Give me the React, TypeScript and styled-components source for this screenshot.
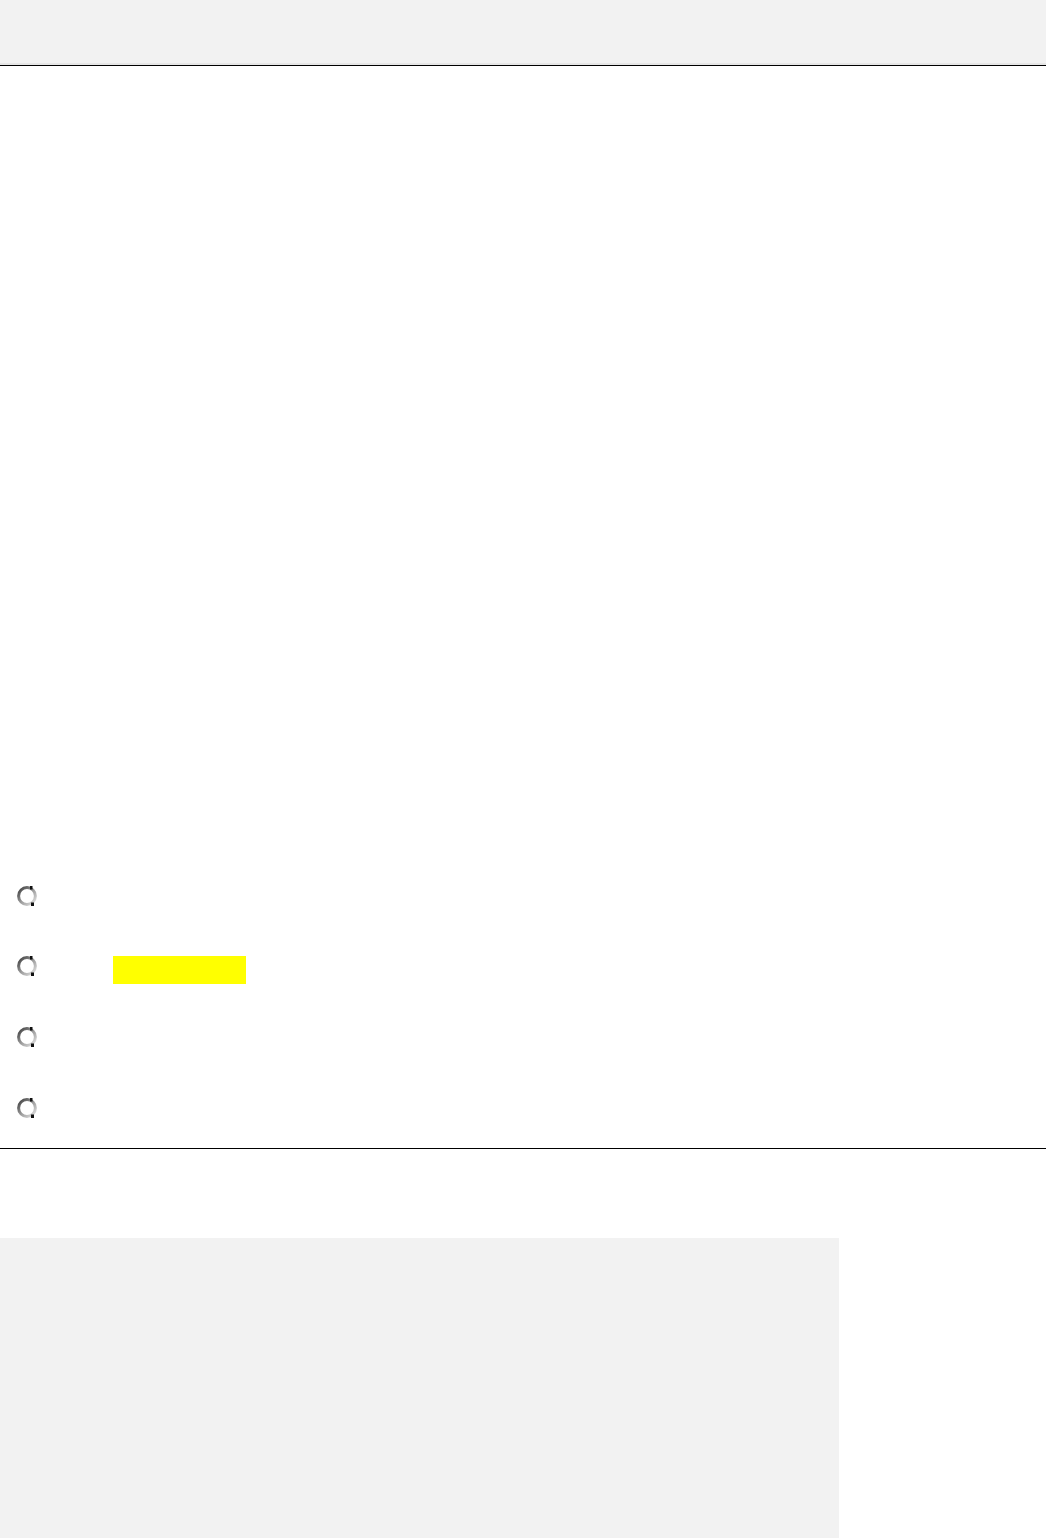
import React from "react";
import styled, { createGlobalStyle } from "styled-components";

const GlobalStyle = createGlobalStyle`
  html, body {
    margin: 0;
    padding: 0;
    background: #ffffff;
    font-family: "Liberation Sans", Arial, sans-serif;
  }
`;

const Page = styled.div`
  width: 1046px;
  display: flex;
  flex-direction: column;
`;

const Header = styled.header`
  height: 63px;
  background: #f2f2f2;
  border-bottom: 2px solid #e6e6e6;
`;

const Rule = styled.div`
  height: 1px;
  background: #000000;
`;

const Content = styled.main`
  padding-top: 794px;
  padding-bottom: 5px;
  display: flex;
  flex-direction: column;
`;

const OptionRow = styled.label<{ $height: number }>`
  height: ${({ $height }) => $height}px;
  display: flex;
  align-items: center;
  padding-left: 16px;
  cursor: pointer;
`;

const Highlight = styled.mark`
  display: block;
  width: 133px;
  height: 28px;
  margin-left: 75px;
  margin-top: 7px;
  background: #ffff00;
`;

const Footer = styled.section`
  padding-top: 89px;
`;

const Panel = styled.div`
  width: 839px;
  height: 300px;
  background: #f2f2f2;
`;

const RadioIcon = () => (
  <svg width="22" height="22" viewBox="0 0 22 22">
    <defs>
      <linearGradient id="ring" x1="0" y1="0" x2="1" y2="1">
        <stop offset="0" stopColor="#3c3c3c" />
        <stop offset="0.5" stopColor="#9a9a9a" />
        <stop offset="1" stopColor="#e6e6e6" />
      </linearGradient>
    </defs>
    <circle cx="11" cy="11" r="8.4" fill="#ffffff" stroke="url(#ring)" strokeWidth="3" />
    <rect x="14" y="1" width="2.5" height="3.5" fill="#111" />
    <rect x="15" y="17.5" width="3" height="3.5" fill="#111" />
  </svg>
);

const options = [
  { height: 71, marked: false },
  { height: 70, marked: true },
  { height: 71, marked: false },
  { height: 71, marked: false },
];

export default function App() {
  return (
    <>
      <GlobalStyle />
      <Page>
        <Header />
        <Rule />
        <Content>
          {options.map((option, i) => (
            <OptionRow key={i} $height={option.height}>
              <RadioIcon />
              {option.marked && <Highlight />}
            </OptionRow>
          ))}
        </Content>
        <Rule />
        <Footer>
          <Panel />
        </Footer>
      </Page>
    </>
  );
}
